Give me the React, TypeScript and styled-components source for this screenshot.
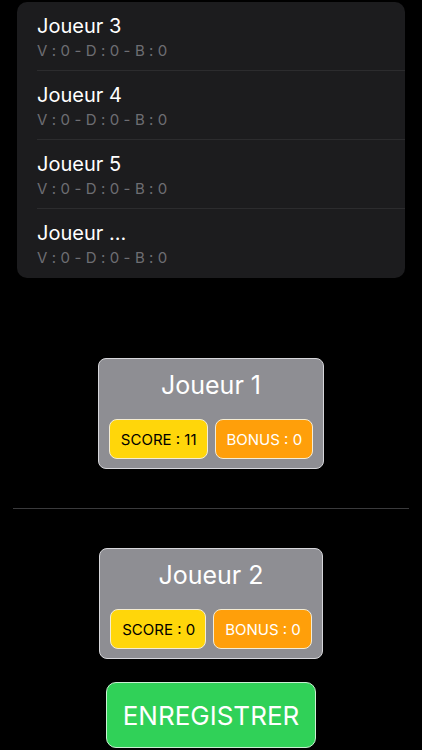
import React from "react";
import styled, { createGlobalStyle } from "styled-components";

const GlobalStyle = createGlobalStyle`
  html, body {
    margin: 0;
    padding: 0;
    background: #000;
  }
  body {
    font-family: Inter, "Liberation Sans", Arial, sans-serif;
  }
`;

interface IPlayer {
  name: string;
  score: number;
  bonus: number;
}

const listPlayers = ["Joueur 3", "Joueur 4", "Joueur 5", "Joueur ..."];

const matchPlayers: IPlayer[] = [
  { name: "Joueur 1", score: 11, bonus: 0 },
  { name: "Joueur 2", score: 0, bonus: 0 },
];

const PlayerCard: React.FC<{ player: IPlayer }> = ({ player }) => (
  <Card>
    <CardTitle>{player.name}</CardTitle>
    <Badges>
      <Badge $kind="score">SCORE : {player.score}</Badge>
      <Badge $kind="bonus">BONUS : {player.bonus}</Badge>
    </Badges>
  </Card>
);

export default function App() {
  return (
    <React.Fragment>
      <GlobalStyle />
      <Screen>
        <List>
          {listPlayers.map((name, i) => (
            <Row key={name} $last={i === listPlayers.length - 1}>
              <RowTitle>{name}</RowTitle>
              <RowStats>V : 0 - D : 0 - B : 0</RowStats>
            </Row>
          ))}
        </List>

        <Match>
          <PlayerCard player={matchPlayers[0]} />
          <Divider />
          <PlayerCard player={matchPlayers[1]} />
          <SaveButton>ENREGISTRER</SaveButton>
        </Match>
      </Screen>
    </React.Fragment>
  );
}

const Screen = styled.div`
  width: 422px;
  height: 750px;
  overflow: hidden;
  background: #000;
  display: flex;
  flex-direction: column;
`;

const List = styled.div`
  margin: 2px 17px 0 17px;
  background: #1c1c1e;
  border-radius: 10px;
  padding-left: 20px;
  overflow: hidden;
`;

const Row = styled.div<{ $last?: boolean }>`
  height: 69px;
  box-sizing: border-box;
  padding-top: 12px;
  border-bottom: ${(p) => (p.$last ? "none" : "1px solid #2c2c2e")};
  display: flex;
  flex-direction: column;
`;

const RowTitle = styled.div`
  font-size: 20px;
  line-height: 24px;
  color: #fff;
`;

const RowStats = styled.div`
  margin-top: 4px;
  font-size: 15px;
  line-height: 18px;
  letter-spacing: 0.1px;
  color: #6e6e73;
`;

const Match = styled.div`
  margin-top: 80px;
  display: flex;
  flex-direction: column;
  align-items: center;
`;

const Card = styled.div`
  background: #8e8e93;
  border: 1px solid #d6d6da;
  border-radius: 8px;
  padding: 11px 10px 9px 10px;
  display: flex;
  flex-direction: column;
  align-items: center;
`;

const CardTitle = styled.div`
  font-size: 25px;
  line-height: 30px;
  color: #fff;
`;

const Badges = styled.div`
  margin-top: 19px;
  display: flex;
  gap: 7px;
`;

const Badge = styled.div<{ $kind: "score" | "bonus" }>`
  height: 40px;
  box-sizing: border-box;
  padding: 0 10px 0 11px;
  border-radius: 8px;
  border: 1px solid #f4ecd4;
  display: flex;
  align-items: center;
  font-size: 15px;
  background: ${(p) => (p.$kind === "score" ? "#ffd60a" : "#ff9f0a")};
  color: ${(p) => (p.$kind === "score" ? "#000" : "#fff")};
`;

const Divider = styled.div`
  align-self: stretch;
  margin: 39px 13px 39px 13px;
  height: 1px;
  background: #3a3a3c;
`;

const SaveButton = styled.button`
  margin-top: 23px;
  height: 66px;
  padding: 0 16px;
  border-radius: 10px;
  border: 1px solid #c9f0d2;
  background: #30d158;
  color: #fff;
  font-family: Inter, "Liberation Sans", Arial, sans-serif;
  font-size: 26px;
`;
